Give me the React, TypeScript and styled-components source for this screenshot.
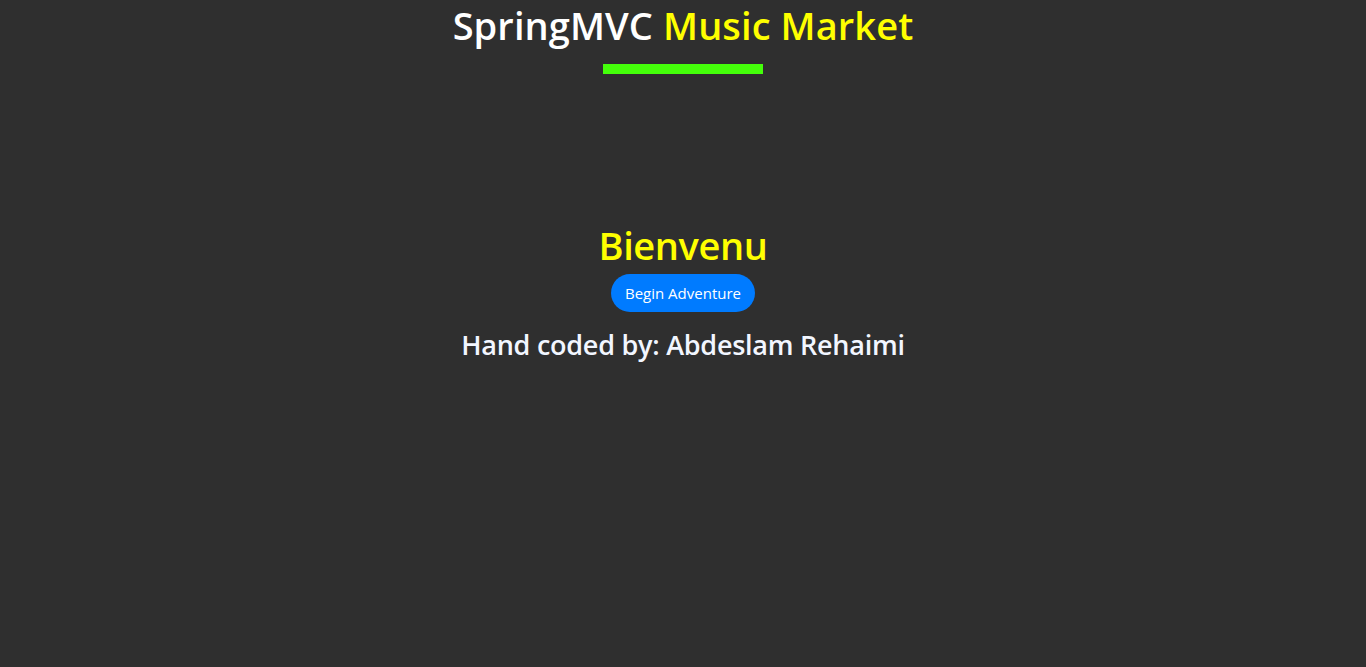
import styled, { createGlobalStyle } from 'styled-components'

const Global = createGlobalStyle`
  html, body {
    margin: 0;
    padding: 0;
    background: #2f2f2f;
  }
  body {
    font-family: "Open Sans", "Noto Sans", sans-serif;
    min-height: 667px;
  }
`

const Page = styled.div`
  display: flex;
  flex-direction: column;
  align-items: center;
  min-height: 667px;
`

const Title = styled.h1`
  margin: 0;
  font-size: 38px;
  font-weight: 600;
  line-height: 50px;
  color: #fff;
  letter-spacing: 0.1px;
`

const Accent = styled.span`
  color: #ffff00;
`

const Bar = styled.div`
  width: 160px;
  height: 10px;
  margin-top: 14px;
  background: #44ff0a;
`

const Welcome = styled.section`
  display: flex;
  flex-direction: column;
  align-items: center;
  margin-top: 146px;
`

const Hello = styled.h2`
  margin: 0;
  font-size: 38px;
  font-weight: 600;
  line-height: 50px;
  color: #ffff00;
  letter-spacing: -0.4px;
`

const Button = styled.button`
  margin-top: 4px;
  height: 38px;
  padding: 0 14px;
  border: none;
  border-radius: 19px;
  background: #007bff;
  color: #fff;
  font-family: inherit;
  font-size: 15px;
  cursor: pointer;
`

const Credit = styled.h3`
  margin: 16px 0 0;
  font-size: 27px;
  font-weight: 600;
  line-height: 34px;
  color: #f2f6ff;
  letter-spacing: -0.25px;
`

export default function App() {
  return (
    <>
      <Global />
      <Page>
        <Title>
          SpringMVC <Accent>Music Market</Accent>
        </Title>
        <Bar />
        <Welcome>
          <Hello>Bienvenu</Hello>
          <Button>Begin Adventure</Button>
          <Credit>Hand coded by: Abdeslam Rehaimi</Credit>
        </Welcome>
      </Page>
    </>
  )
}
